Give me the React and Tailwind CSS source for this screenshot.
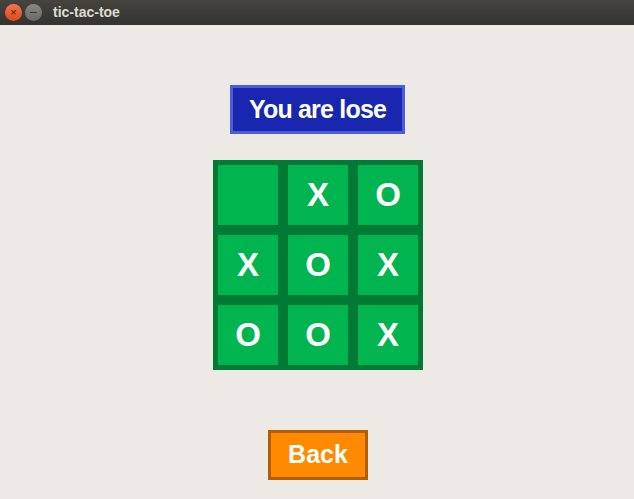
const board = ['', 'X', 'O', 'X', 'O', 'X', 'O', 'O', 'X'];

function TitleBar() {
  return (
    <div className="flex h-[25px] items-center bg-gradient-to-b from-[#45443f] to-[#34332f] pl-[5px]">
      <div className="flex h-[17px] w-[17px] items-center justify-center rounded-full bg-gradient-to-b from-[#f4744a] to-[#dd4a1b] text-[11px] leading-none text-[#5a1a08]">
        ×
      </div>
      <div className="ml-[3px] flex h-[17px] w-[17px] items-center justify-center rounded-full bg-gradient-to-b from-[#8a8883] to-[#6b6a65]">
        <div className="h-[1px] w-[7px] bg-[#3b3a36]" />
      </div>
      <span className="ml-[11px] text-[14px] font-bold text-[#dfdbd2]">tic-tac-toe</span>
    </div>
  );
}

export default function App() {
  return (
    <div className="flex h-[499px] w-[634px] flex-col bg-[#edeae6] font-['Liberation_Sans',Arial,sans-serif]">
      <TitleBar />
      <div className="flex flex-1 flex-col items-center">
        <div className="ml-[1px] mt-[60px] flex h-[49px] w-[175px] items-center justify-center border-[3px] border-[#4a5ddf] bg-[#1826b0] text-[25px] font-bold tracking-[-0.8px] text-white">
          You are lose
        </div>
        <div className="ml-[2px] mt-[26px] grid grid-cols-[repeat(3,60px)] gap-[10px] bg-[#007a35] p-[5px]">
          {board.map((v, i) => (
            <div key={i} className="flex h-[60px] w-[60px] items-center justify-center bg-[#00b550] text-[33px] font-bold text-white">
              {v}
            </div>
          ))}
        </div>
        <button className="ml-[2px] mt-[60px] flex h-[50px] w-[100px] items-center justify-center border-[3px] border-[#b35c00] bg-[#ff8a00] text-[25px] font-bold text-white">
          Back
        </button>
      </div>
    </div>
  );
}
